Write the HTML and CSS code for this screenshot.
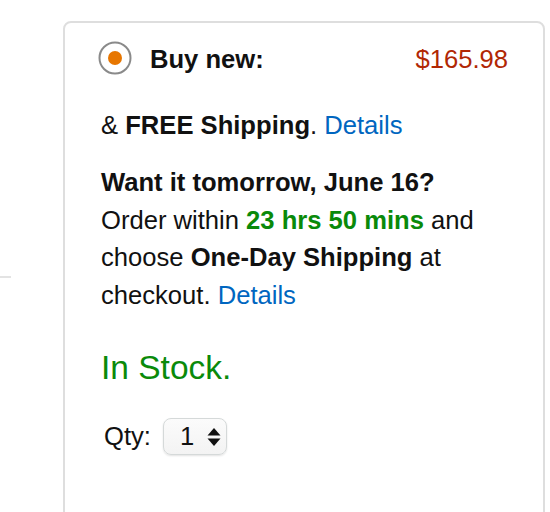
FILE: index.html
```html
<!DOCTYPE html>
<html>
<head>
<meta charset="utf-8">
<link rel="stylesheet" href="styles.css">
</head>
<body>
<div class="page">
  <div class="side"><div class="side-line"></div></div>
  <div class="card">
    <div class="buy-row">
      <span class="radio">
        <svg width="34" height="34" viewBox="0 0 34 34"><circle cx="17" cy="17" r="15.5" fill="#fff" stroke="#8a8a8a" stroke-width="2"/><circle cx="17" cy="17" r="7" fill="#e77600"/></svg>
      </span>
      <span class="buy-label">Buy new:</span>
      <span class="price">$165.98</span>
    </div>
    <p class="ship">&amp; <b>FREE Shipping</b>. <a href="#" class="link">Details</a></p>
    <p class="delivery"><b>Want it tomorrow, June 16?</b><br>Order within <b class="green">23 hrs 50 mins</b> and choose <b>One-Day Shipping</b> at checkout. <a href="#" class="link">Details</a></p>
    <p class="stock">In Stock.</p>
    <div class="qty-row">
      <span class="qty-label">Qty:</span>
      <span class="select"><span class="sel-val">1</span>
        <svg class="arrows" width="14" height="20" viewBox="0 0 14 20"><path d="M7 1 L13.5 8.5 L0.5 8.5 Z" fill="#111"/><path d="M7 19 L13.5 11.5 L0.5 11.5 Z" fill="#111"/></svg>
      </span>
    </div>
  </div>
</div>
</body>
</html>
```
FILE: styles.css
```css
html, body {
  margin: 0;
  padding: 0;
  background: #fff;
  overflow: hidden;
}
body {
  font-family: "Liberation Sans", Arial, sans-serif;
  font-size: 25.6px;
  line-height: 37.4px;
  color: #111;
}
.page {
  display: flex;
  width: 550px;
  height: 512px;
}
.side {
  width: 63px;
  flex: none;
}
.side-line {
  width: 11px;
  height: 2px;
  background: #e3e3e3;
  margin-top: 276px;
}
.card {
  margin-top: 21px;
  width: 482px;
  height: 700px;
  flex: none;
  border: 2px solid #dedede;
  border-radius: 8px;
  box-sizing: border-box;
  padding: 18px 35px 0 36px;
}
.buy-row {
  display: flex;
  align-items: center;
  height: 37px;
}
.radio {
  display: flex;
  margin-left: -3px;
  margin-right: 18px;
  margin-top: -3px;
}
.buy-label {
  font-weight: bold;
}
.price {
  margin-left: auto;
  color: #b12704;
}
p { margin: 0; }
.ship {
  margin-top: 29px;
}
.delivery {
  margin-top: 20px;
}
.link {
  color: #0066c0;
  text-decoration: none;
}
.green { color: #0a8a0a; }
.stock {
  color: #0a8a0a;
  font-size: 33.5px;
  line-height: 42px;
  margin-top: 33px;
}
.qty-row {
  display: flex;
  align-items: center;
  margin-top: 29px;
  margin-left: 3px;
}
.qty-label {
  margin-right: 12px;
}
.select {
  display: flex;
  align-items: center;
  box-sizing: border-box;
  width: 64px;
  height: 37px;
  border: 1px solid #d5d9d9;
  border-radius: 8px;
  background: linear-gradient(#fbfbfb, #f3f3f3);
  box-shadow: 0 1px 2px rgba(15,17,17,0.12);
  padding-left: 16px;
}
.sel-val {
  line-height: 1;
}
.arrows {
  margin-left: 13px;
}
```
